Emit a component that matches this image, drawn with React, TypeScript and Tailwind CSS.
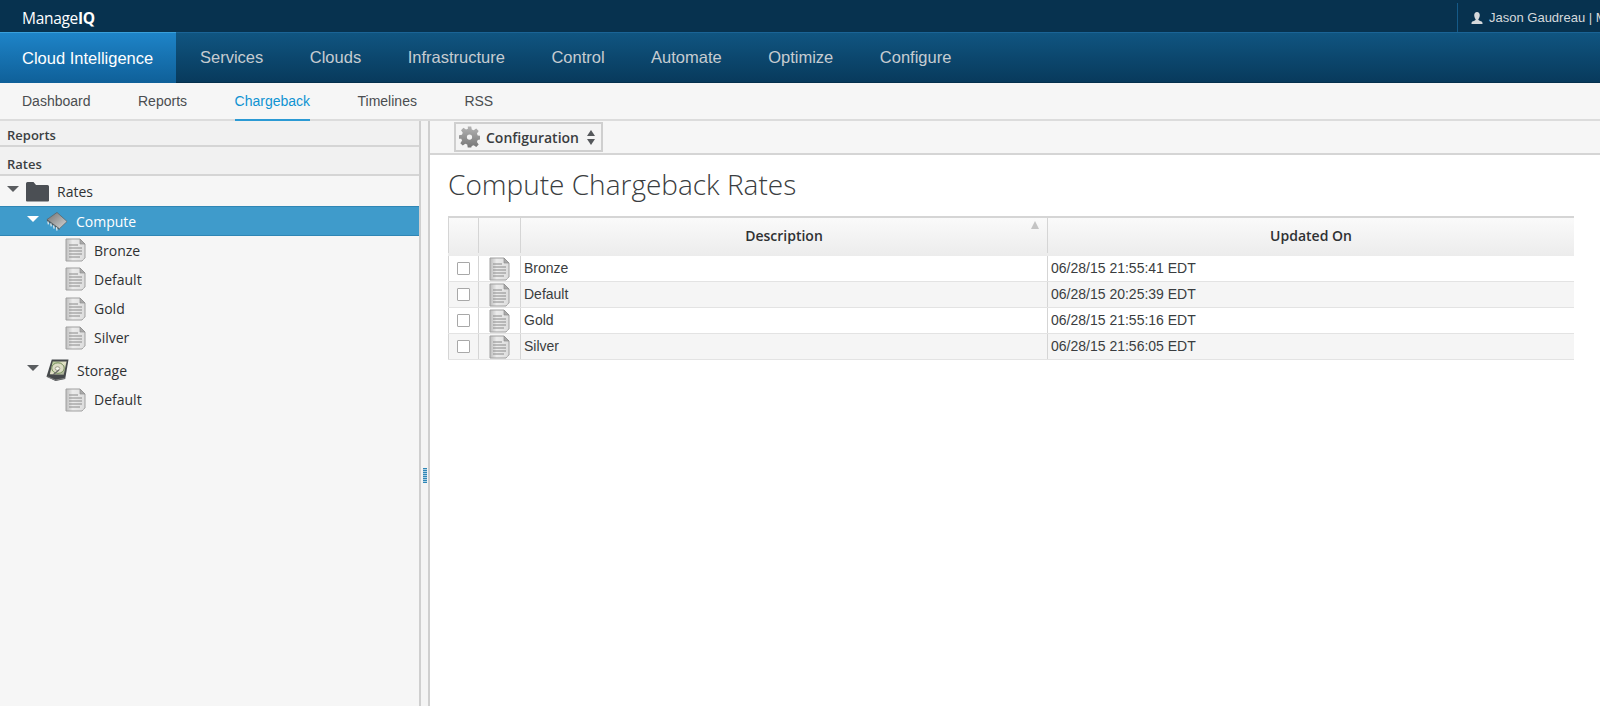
import React from "react"

const mainNav = ["Services", "Clouds", "Infrastructure", "Control", "Automate", "Optimize", "Configure"]
const subNav = ["Dashboard", "Reports", "Chargeback", "Timelines", "RSS"]
const rows = [
  { name: "Bronze", updated: "06/28/15 21:55:41 EDT" },
  { name: "Default", updated: "06/28/15 20:25:39 EDT" },
  { name: "Gold", updated: "06/28/15 21:55:16 EDT" },
  { name: "Silver", updated: "06/28/15 21:56:05 EDT" },
]

const DocIcon = () => (
  <svg width="21" height="24" viewBox="0 0 21 24" className="shrink-0">
    <defs>
      <linearGradient id="docFill" x1="0" x2="1" y1="0" y2="0">
        <stop offset="0" stopColor="#bdbdbd" />
        <stop offset="0.35" stopColor="#ececec" />
        <stop offset="1" stopColor="#dcdcdc" />
      </linearGradient>
    </defs>
    <path d="M1 1h14l5 5v14c-1 1-2 1.500-3 3H1z" fill="url(#docFill)" stroke="#a0a0a0" strokeWidth="1" />
    <path d="M15 1v5h5z" fill="#a9a9a9" stroke="#8f8f8f" strokeWidth="0.7" />
    <path d="M4 7h9M4 10h13M4 13h13M4 16h13M4 19h11" stroke="#8a8a8a" strokeWidth="1" />
  </svg>
)

const ChipIcon = () => (
  <svg width="22" height="21" viewBox="0 0 23 21" className="shrink-0">
    <defs>
      <linearGradient id="chipFill" x1="0" x2="1" y1="0" y2="1">
        <stop offset="0" stopColor="#6f6f6f" />
        <stop offset="0.55" stopColor="#a8a8a8" />
        <stop offset="1" stopColor="#d8d8d8" />
      </linearGradient>
    </defs>
    <path d="M1 8.500 11.500 1 22 10.500 14 18z" fill="url(#chipFill)" stroke="#5d5d5d" strokeWidth="0.7" />
    <path d="M1 8.500 14 18l0 1.500L1 10z" fill="#55595c" />
    <path d="M2 10.500l.5 3M5 12.500l.5 3M8 14.500l.5 3.500M11 16.500l.5 3.500" stroke="#f2f2f2" strokeWidth="1.200" />
  </svg>
)

const DiskIcon = () => (
  <svg width="23" height="24" viewBox="0 0 24 24" className="shrink-0">
    <defs>
      <linearGradient id="diskFill" x1="0" x2="1" y1="0" y2="1">
        <stop offset="0" stopColor="#a9c18a" />
        <stop offset="0.5" stopColor="#e4e2c8" />
        <stop offset="1" stopColor="#8f9a80" />
      </linearGradient>
    </defs>
    <path d="M6 1h17.500L20 21.500 10 23.500 .5 19z" fill="#45484a" />
    <path d="M7 3h14.500L18.500 17 4 16.500z" fill="url(#diskFill)" />
    <ellipse cx="12.500" cy="10" rx="6.500" ry="5.500" fill="#dcdcc4" stroke="#6f8a55" strokeWidth="1" />
    <ellipse cx="12" cy="10.500" rx="2.400" ry="1.900" fill="#f7f7ec" stroke="#7b7b6a" strokeWidth="0.7" />
    <path d="M7.500 17l6-5" stroke="#666" strokeWidth="1.200" />
    <path d="M1.500 19 10 22.500 20 20.500" stroke="#8d8d8d" strokeWidth="0.8" fill="none" />
  </svg>
)

const FolderIcon = () => (
  <svg width="23" height="21" viewBox="0 0 23 21" className="shrink-0">
    <path d="M0 2.500A1.500 1.500 0 0 1 1.500 1h6L10 4h11.500A1.500 1.500 0 0 1 23 5.500V19.500a1 1 0 0 1-1 1H1a1 1 0 0 1-1-1z" fill="#4b4f54" />
  </svg>
)

const GearIcon = () => (
  <svg width="21" height="22" viewBox="0 0 24 24" className="shrink-0">
    <defs>
      <linearGradient id="gearFill" x1="0" x2="0" y1="0" y2="1">
        <stop offset="0" stopColor="#b3b3b3" />
        <stop offset="1" stopColor="#777777" />
      </linearGradient>
    </defs>
    <path
      fillRule="evenodd"
      d="M10 0h4l.6 3.400 2.200.9L19.700 2.300l2.800 2.800-2 2.900.9 2.200 3.400.6v4l-3.400.6-.9 2.200 2 2.900-2.800 2.800-2.900-2-2.200.9L14 24h-4l-.6-3.300-2.200-.9-2.900 2-2.800-2.800 2-2.900-.9-2.200L0 14v-4l3.400-.6.900-2.200-2-2.900 2.800-2.800 2.900 2 2.200-.9zM12 9a3 3 0 1 0 0 6 3 3 0 0 0 0-6z"
      fill="url(#gearFill)"
    />
  </svg>
)

const TreeRow = ({
  indent,
  icon,
  label,
  arrow,
  selected,
  height,
}: {
  indent: string
  icon: React.ReactNode
  label: string
  arrow?: boolean
  selected?: boolean
  height: string
}) => (
  <div
    className={`flex items-center ${height} ${indent} ${
      selected ? "bg-[#3f9bcb] border-y border-[#2f86b5] text-white" : "text-[#2f3133]"
    }`}
  >
    {arrow && (
      <span
        className={`w-0 h-0 mr-[7px] mb-[5px] border-x-[6px] border-x-transparent border-t-[6px] ${
          selected ? "border-t-white" : "border-t-[#5a5d60]"
        }`}
      />
    )}
    {icon}
    <span className="ml-[8px] text-[14px] font-['Open_Sans',sans-serif]">{label}</span>
  </div>
)

const App = () => {
  return (
    <div className="w-[1600px] h-[706px] overflow-hidden flex flex-col bg-white font-['Liberation_Sans',sans-serif]">
      {/* top bar */}
      <div className="h-[32px] shrink-0 bg-[#07324f] flex items-center justify-between">
        <div className="pl-[22px] pt-[5px] text-[15.5px] text-white font-['Open_Sans',sans-serif] tracking-[-0.3px]">
          Manage<span className="font-bold">IQ</span>
        </div>
        <div className="h-[29px] w-[143px] mt-[3px] border-l border-[#155a88] flex items-center pl-[13px] overflow-hidden whitespace-nowrap text-[13px] text-[#d5d9dc]">
          <svg width="12" height="12" viewBox="0 0 12 12" className="mr-[6px] shrink-0">
            <path d="M6 0c1.800 0 2.800 1.300 2.800 3.200S7.800 6.600 7.300 7.200c0 .8.300 1 1.500 1.500 1.400.5 2.700 1 2.700 2.300v1H.5v-1c0-1.300 1.300-1.800 2.700-2.300 1.200-.5 1.500-.7 1.500-1.500-.5-.6-1.500-2.100-1.500-4S4.200 0 6 0z" fill="#d5d9dc" />
          </svg>
          Jason Gaudreau | My Company
        </div>
      </div>

      {/* main nav */}
      <div className="h-[51px] shrink-0 flex bg-gradient-to-b from-[#105581] to-[#083a5c] border-y border-t-[#1a6496] border-b-[#05304d]">
        <div className="w-[176px] -mt-px h-[51px] bg-gradient-to-b from-[#1e84c8] to-[#0f6099] border-t border-[#38a0dc] flex items-center pl-[22px] text-[16.5px] text-white">
          Cloud Intelligence
        </div>
        <div className="flex items-center pl-[24px] gap-[46.5px] text-[16.5px] text-[#c6ccd1]">
          {mainNav.map((item) => (
            <span key={item}>{item}</span>
          ))}
        </div>
      </div>

      {/* sub nav */}
      <div className="h-[38px] shrink-0 bg-[#f6f6f6] border-b-2 border-[#dcdcdc] flex pl-[22px] gap-[47.5px] text-[14px] text-[#4a4d50]">
        {subNav.map((item) =>
          item === "Chargeback" ? (
            <span key={item} className="h-[38px] flex items-center text-[#0f93d2] border-b-2 border-[#2b9ad4]">
              {item}
            </span>
          ) : (
            <span key={item} className="h-[36px] flex items-center">
              {item}
            </span>
          )
        )}
      </div>

      <div className="flex-1 flex min-h-0">
        {/* left panel */}
        <div className="w-[421px] shrink-0 bg-[#f6f6f6] border-r-2 border-[#cfcfcf] font-['Open_Sans',sans-serif]">
          <div className="h-[26px] bg-[#f1f1f1] border-b-2 border-[#d5d5d5] flex items-end pb-[1px] pl-[7px] text-[13px] leading-[18px] font-semibold text-[#3c3f42]">
            Reports
          </div>
          <div className="h-[29px] bg-[#f1f1f1] border-b-2 border-[#d5d5d5] flex items-end pb-[1px] pl-[7px] text-[13px] leading-[18px] font-semibold text-[#3c3f42]">
            Rates
          </div>
          <TreeRow indent="pl-[7px]" arrow icon={<FolderIcon />} label="Rates" height="h-[30px]" />
          <TreeRow indent="pl-[27px]" arrow selected icon={<ChipIcon />} label="Compute" height="h-[30px]" />
          <TreeRow indent="pl-[65px]" icon={<DocIcon />} label="Bronze" height="h-[28px]" />
          <TreeRow indent="pl-[65px]" icon={<DocIcon />} label="Default" height="h-[30px]" />
          <TreeRow indent="pl-[65px]" icon={<DocIcon />} label="Gold" height="h-[29px]" />
          <TreeRow indent="pl-[65px]" icon={<DocIcon />} label="Silver" height="h-[29px]" />
          <TreeRow indent="pl-[27px] pt-[3px]" arrow icon={<DiskIcon />} label="Storage" height="h-[33px]" />
          <TreeRow indent="pl-[65px]" icon={<DocIcon />} label="Default" height="h-[29px]" />
        </div>

        {/* splitter */}
        <div className="w-[9px] shrink-0 bg-[#f4f4f4] border-r-2 border-[#cfcfcf] flex items-center justify-center pt-[124px]">
          <div className="w-[4px] h-[15px] ml-[1px] bg-[repeating-linear-gradient(to_bottom,#2f86b5_0,#2f86b5_1px,#a9cfe4_1px,#a9cfe4_2px)]" />
        </div>

        {/* content */}
        <div className="flex-1 min-w-0">
          <div className="h-[34px] bg-[#f6f6f6] border-b-2 border-[#d5d5d5] pl-[24px] flex items-start pt-[1px]">
            <div className="w-[149px] h-[30px] border-2 border-[#cfcfcf] bg-[#f4f4f4] flex items-center pl-[3px] font-['Open_Sans',sans-serif] text-[14px] font-semibold text-[#3a3d40]">
              <GearIcon />
              <span className="ml-[6px]">Configuration</span>
              <span className="ml-[8px] flex flex-col gap-[3px]">
                <span className="w-0 h-0 border-x-[4px] border-x-transparent border-b-[6px] border-b-[#55585b]" />
                <span className="w-0 h-0 border-x-[4px] border-x-transparent border-t-[6px] border-t-[#55585b]" />
              </span>
            </div>
          </div>

          <h1 className="pl-[18px] pt-[10px] h-[61px] text-[28px] leading-[38px] font-light text-[#3a3d40] font-['Open_Sans',sans-serif]">
            Compute Chargeback Rates
          </h1>

          <div className="ml-[18px] w-[1126px] border-t-2 border-[#d5d5d5]">
            <div className="flex h-[38px] pb-[3px] bg-gradient-to-b from-[#fafafa] to-[#ececec] font-['Open_Sans',sans-serif] text-[14px] font-semibold text-[#2f3133]">
              <div className="w-[31px] border-x border-[#d5d5d5]" />
              <div className="w-[42px] border-r border-[#d5d5d5]" />
              <div className="w-[527px] border-r border-[#d5d5d5] relative flex items-center justify-center">
                Description
                <span className="absolute right-[8px] top-[3px] w-0 h-0 border-x-[4px] border-x-transparent border-b-[8px] border-b-[#c4c4c4]" />
              </div>
              <div className="flex-1 flex items-center justify-center">Updated On</div>
            </div>
            {rows.map((row, i) => (
              <div
                key={row.name}
                className={`flex h-[26px] border-b border-[#e3e3e3] text-[14px] text-[#3a3d40] ${
                  i % 2 === 0 ? "bg-white" : "bg-[#f5f5f5]"
                }`}
              >
                <div className="w-[31px] border-x border-[#d5d5d5] flex items-center justify-center">
                  <span className="w-[13px] h-[13px] bg-white border border-[#a8a8a8] rounded-[1px]" />
                </div>
                <div className="w-[42px] border-r border-[#d5d5d5] flex items-center justify-center">
                  <DocIcon />
                </div>
                <div className="w-[527px] border-r border-[#d5d5d5] flex items-center pl-[3px]">{row.name}</div>
                <div className="flex-1 flex items-center pl-[3px]">{row.updated}</div>
              </div>
            ))}
          </div>
        </div>
      </div>
    </div>
  )
}

export default App
